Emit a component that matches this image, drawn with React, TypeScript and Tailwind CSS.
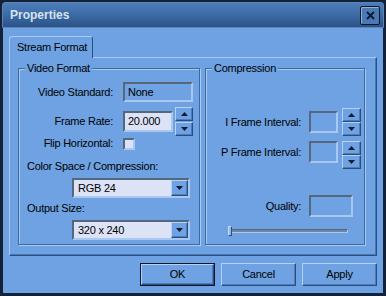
import React from 'react';

const font = { fontFamily: '"Liberation Sans", Arial, sans-serif' };

const Tri: React.FC<{ up?: boolean }> = ({ up }) => (
  <svg width="7" height="4" viewBox="0 0 7 4">
    <polygon points={up ? '3.5,0 7,4 0,4' : '0,0 7,0 3.5,4'} fill="#0e1c33" />
  </svg>
);

const Raised: React.FC<{ className?: string; children?: React.ReactNode }> = ({ className = '', children }) => (
  <div
    className={`flex items-center justify-center bg-[#6ea2e2] border border-t-[#b4d2f8] border-l-[#b4d2f8] border-b-[#2b4e80] border-r-[#2b4e80] shadow-[inset_-1px_-1px_0_#4f7cb6] ${className}`}
  >
    {children}
  </div>
);

const Spin: React.FC<{ className?: string }> = ({ className = '' }) => (
  <div className={`flex flex-col justify-between ${className}`}>
    <Raised className="h-[14px]">
      <Tri up />
    </Raised>
    <Raised className="h-[14px]">
      <Tri />
    </Raised>
  </div>
);

const sunken =
  'border-2 border-t-[#55677c] border-l-[#55677c] border-b-[#a9c7ef] border-r-[#a9c7ef]';

const Select: React.FC<{ value: string; className?: string }> = ({ value, className = '' }) => (
  <div className={`flex items-stretch bg-[#dce3f7] ${sunken} ${className}`}>
    <div className="flex-1 flex items-center pl-[4px] text-black">{value}</div>
    <Raised className="w-[17px]">
      <Tri />
    </Raised>
  </div>
);

const Group: React.FC<{ title: string; className?: string; children?: React.ReactNode }> = ({
  title,
  className = '',
  children,
}) => (
  <div
    className={`relative border border-[#3c68a4] shadow-[inset_1px_1px_0_#a9cbf3,1px_1px_0_#a9cbf3] ${className}`}
  >
    <span className="absolute -top-[8px] left-[6px] px-[2px] bg-[#6ea2e2] leading-[14px]">{title}</span>
    {children}
  </div>
);

export default function App() {
  return (
    <div
      className="w-[386px] h-[296px] bg-[#142238] p-[2px] pb-[3px] flex flex-col text-[11px] tracking-[-0.25px] text-black select-none"
      style={font}
    >
      {/* Title bar */}
      <div className="h-[26px] flex items-center justify-between rounded-t-[3px] border border-[#5b84b8] bg-gradient-to-b from-[#4d7db8] via-[#3c6aa4] to-[#2c5288] pl-[7px] pr-[3px]">
        <span className="text-[12px] font-bold tracking-normal text-[#d6e2f2]">Properties</span>
        <div className="w-[20px] h-[19px] rounded-[2px] border border-[#0a1526] bg-[#4a7ab6] shadow-[inset_1px_1px_0_#8fb3e0] flex items-center justify-center">
          <svg width="9" height="9" viewBox="0 0 9 9">
            <path d="M1 1 L8 8 M8 1 L1 8" stroke="#0e1c33" strokeWidth="2" />
          </svg>
        </div>
      </div>

      {/* Body */}
      <div className="flex-1 bg-[#6ea2e2] mx-[1px] flex flex-col">
        {/* Tab */}
        <div className="pl-[6px] pt-[8px] flex">
          <div className="w-[84px] h-[22px] -mb-[1px] relative z-10 bg-[#6ea2e2] rounded-t-[3px] border border-b-0 border-t-[#a9cbf3] border-l-[#a9cbf3] border-r-[#2b4e80] flex items-center pl-[7px]">
            Stream Format
          </div>
        </div>

        {/* Panel */}
        <div className="ml-[6px] w-[368px] h-[199px] border border-t-[#a9cbf3] border-l-[#a9cbf3] border-b-[#2b4e80] border-r-[#2b4e80] shadow-[inset_-1px_-1px_0_#4a76b0] flex px-[8px] pt-[10px]">
          <Group title="Video Format" className="w-[182px] h-[177px] flex flex-col">
            <div className="flex items-center mt-[13px] h-[20px]">
              <span className="w-[104px] text-right pr-[10px]">Video Standard:</span>
              <div className={`w-[70px] h-[20px] ${sunken} flex items-center pl-[3px]`}>None</div>
            </div>
            <div className="flex items-center mt-[5px] h-[29px]">
              <span className="w-[104px] text-right pr-[10px]">Frame Rate:</span>
              <div className={`w-[50px] h-[21px] bg-[#dce3f7] ${sunken} flex items-center pl-[3px]`}>20.000</div>
              <Spin className="ml-[2px] w-[18px] h-[29px]" />
            </div>
            <div className="flex items-center mt-[1px] h-[13px]">
              <span className="w-[104px] text-right pr-[10px]">Flip Horizontal:</span>
              <div className={`w-[12px] h-[12px] bg-[#dce3f7] ${sunken}`} />
            </div>
            <div className="mt-[10px] pl-[8px] leading-[13px]">Color Space / Compression:</div>
            <Select value="RGB 24" className="mt-[5px] ml-[53px] w-[118px] h-[20px]" />
            <div className="mt-[4px] pl-[8px] leading-[13px]">Output Size:</div>
            <Select value="320 x 240" className="mt-[5px] ml-[53px] w-[118px] h-[20px]" />
          </Group>

          <Group title="Compression" className="ml-[5px] w-[160px] h-[177px] flex flex-col">
            <div className="flex items-center mt-[39px] h-[28px]">
              <span className="w-[103px] text-right pr-[8px]">I Frame Interval:</span>
              <div className={`w-[29px] h-[22px] ${sunken}`} />
              <Spin className="ml-[4px] w-[19px] h-[28px]" />
            </div>
            <div className="flex items-start mt-[5px] h-[28px]">
              <span className="w-[103px] text-right pr-[8px] leading-[22px]">P Frame Interval:</span>
              <div className={`w-[29px] h-[22px] ${sunken}`} />
              <Spin className="ml-[4px] w-[19px] h-[28px]" />
            </div>
            <div className="flex items-center mt-[26px] h-[22px]">
              <span className="w-[103px] text-right pr-[8px]">Quality:</span>
              <div className={`w-[44px] h-[22px] ${sunken}`} />
            </div>
            <div className="relative mt-[9px] ml-[22px] w-[120px] h-[10px] flex items-center">
              <div className="w-full h-[4px] border border-t-[#55677c] border-l-[#55677c] border-b-[#a9c7ef] border-r-[#a9c7ef] bg-[#6a87a8]" />
              <div className="absolute left-0 top-0 w-[4px] h-[10px] bg-[#8fb8ec] border border-t-[#c4dcfa] border-l-[#c4dcfa] border-b-[#2b4e80] border-r-[#2b4e80]" />
            </div>
          </Group>
        </div>

        {/* Buttons */}
        <div className="flex justify-end gap-[6px] pr-[6px] mt-[7px]">
          <div className="w-[75px] h-[23px] border border-[#0a1526]">
            <Raised className="w-full h-full">OK</Raised>
          </div>
          <Raised className="w-[75px] h-[23px]">Cancel</Raised>
          <Raised className="w-[75px] h-[23px]">Apply</Raised>
        </div>
      </div>
    </div>
  );
}
